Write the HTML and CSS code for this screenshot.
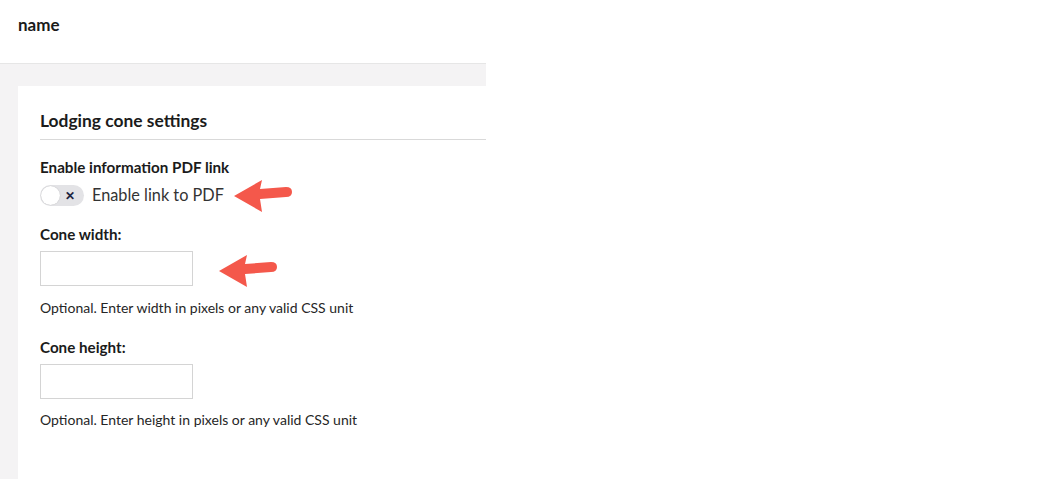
FILE: index.html
```html
<!DOCTYPE html>
<html>
<head>
<meta charset="utf-8">
<link rel="stylesheet" href="styles.css">
</head>
<body>
<div class="app">
  <header class="topbar"><span class="title">name</span></header>
  <main class="main">
    <section class="card">
      <h2 class="card-title">Lodging cone settings</h2>
      <div class="field">
        <div class="label">Enable information PDF link</div>
        <div class="toggle-row">
          <span class="switch"><span class="knob"></span><span class="cross">✕</span></span>
          <span class="toggle-text">Enable link to PDF</span>
          <svg class="arrow arrow1" width="62" height="36" viewBox="0 0 62 36"><path d="M2 18 L30 2 L28 11 L54 9 Q60 9 60 14 Q60 19 54 19 L28 21 L30 34 Z" fill="#f4584b"/></svg>
        </div>
      </div>
      <div class="field">
        <div class="label lbl-gap">Cone width:</div>
        <div class="input-wrap">
          <input class="text-input" type="text">
          <svg class="arrow arrow2" width="62" height="36" viewBox="0 0 62 36"><path d="M2 18 L30 2 L28 11 L54 9 Q60 9 60 14 Q60 19 54 19 L28 21 L30 34 Z" fill="#f4584b"/></svg>
        </div>
        <div class="help">Optional. Enter width in pixels or any valid CSS unit</div>
      </div>
      <div class="field">
        <div class="label lbl-gap2">Cone height:</div>
        <div class="input-wrap"><input class="text-input" type="text"></div>
        <div class="help help2">Optional. Enter height in pixels or any valid CSS unit</div>
      </div>
    </section>
  </main>
</div>
</body>
</html>
```
FILE: styles.css
```css
html, body { margin: 0; padding: 0; background: #fff; }
body { font-family: Lato, "Open Sans", sans-serif; color: #1b1b1b; }
.app { width: 486px; height: 479px; display: flex; flex-direction: column; }
.topbar { border-bottom: 1px solid #e6e6e6; display: flex; align-items: center; padding-left: 18px; box-sizing: border-box; height: 64px; padding-bottom: 14px; }
.title { font-weight: 700; font-size: 17px; }
.main { flex: 1; background: #f4f3f4; padding: 22px 0 0 18px; display: flex; }
.card { flex: 1; background: #fff; padding: 23px 0 0 22px; }
.card-title { margin: 0; font-size: 17.4px; font-weight: 700; line-height: 24px; padding-bottom: 6px; border-bottom: 1px solid #d9d9d9; }
.field { display: flex; flex-direction: column; align-items: flex-start; }
.label { font-size: 15.2px; font-weight: 700; line-height: 20px; margin-top: 17px; }
.toggle-row { display: flex; align-items: center; height: 24px; margin-top: 6px; position: relative; }
.switch { width: 44px; height: 21px; border-radius: 11px; background: #e3e3e6; position: relative; display: inline-block; }
.knob { position: absolute; left: 1px; top: 1px; width: 19px; height: 19px; border-radius: 50%; background: #fff; box-shadow: 0 0 1px rgba(0,0,0,0.25); }
.cross { position: absolute; left: 25px; top: 0; line-height: 21px; font-size: 12px; font-weight: 700; color: #1c2541; }
.toggle-text { margin-left: 8px; font-size: 16.3px; color: #333; line-height: 24px; }
.arrow { position: absolute; }
.arrow1 { left: 192px; top: -5px; }
.lbl-gap { margin-top: 17px; }
.input-wrap { margin-top: 7px; position: relative; }
.text-input { display: block; width: 153px; height: 35px; box-sizing: border-box; border: 1px solid #d4d4d4; border-radius: 0; padding: 0 8px; font: inherit; margin: 0; }
.arrow2 { left: 177px; top: 2px; }
.help { font-size: 14px; line-height: 18px; color: #262626; margin-top: 13px; }
.lbl-gap2 { margin-top: 20px; }
.help2 { margin-top: 12px; }
```
